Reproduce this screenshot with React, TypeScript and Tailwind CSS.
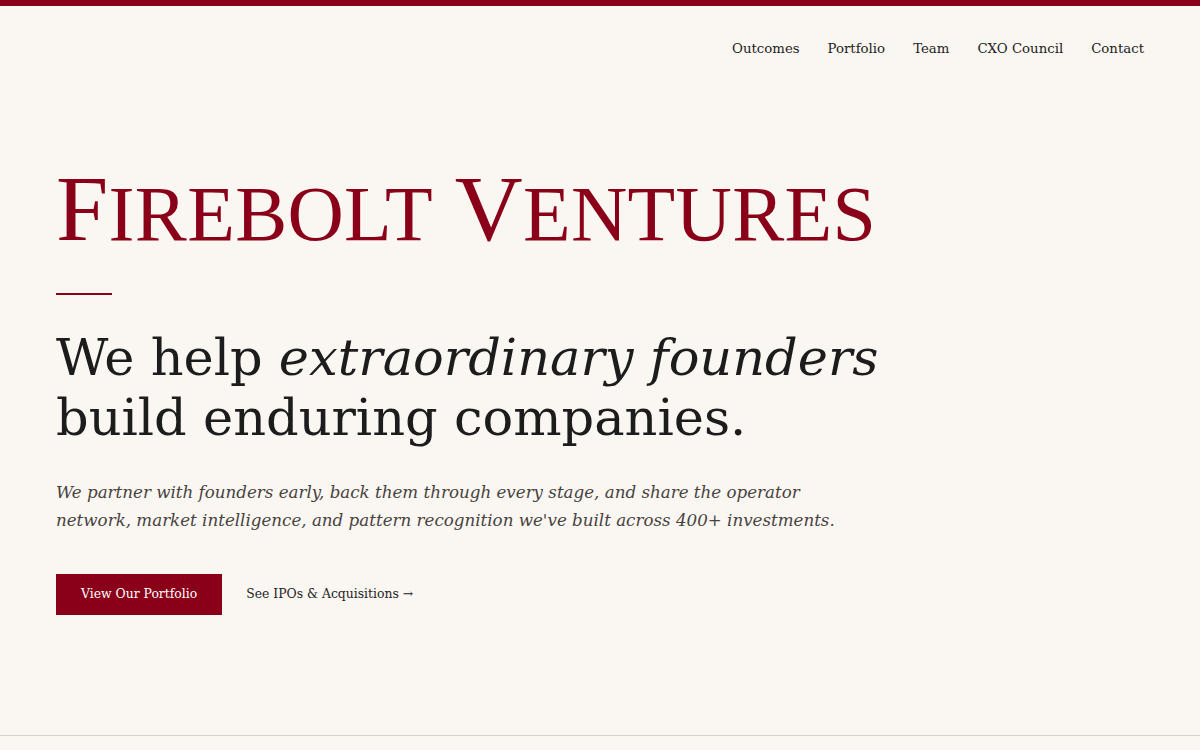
const navLinks = ['Outcomes', 'Portfolio', 'Team', 'CXO Council', 'Contact']

const display = { fontFamily: '"Liberation Serif", "DejaVu Serif", serif' }
const body = { fontFamily: '"DejaVu Serif", "Liberation Serif", serif' }

function Wordmark() {
  // Small-caps wordmark: large initials, smaller capitals for the rest
  return (
    <h1 className="flex items-baseline text-[#8a0019] leading-none tracking-[0.3px]" style={display}>
      <span className="text-[94px]">F</span>
      <span className="text-[78px]">IREBOLT</span>
      <span className="w-[22px]" />
      <span className="text-[94px]">V</span>
      <span className="text-[78px]">ENTURES</span>
    </h1>
  )
}

export default function App() {
  return (
    <div className="min-h-[750px] bg-[#faf6f2] text-[#1f1f1f]" style={body}>
      <div className="h-[6px] bg-[#8a0019]" />

      <header className="flex justify-end px-14 pt-[33px]">
        <nav className="flex gap-7 text-[13.3px] text-[#222]">
          {navLinks.map((l) => (
            <a key={l} href="#" className="leading-5 hover:text-[#8a0019]">
              {l}
            </a>
          ))}
        </nav>
      </header>

      <main className="flex h-[677px] flex-col border-b border-[#d6d1cc] px-14 pt-[102px]">
        <Wordmark />

        <div className="mt-[38px] h-[2px] w-[56px] bg-[#8a0019]" />

        <h2 className="mt-[33px] text-[51px] leading-[60px] text-[#1c1c1c]">
          We help <em>extraordinary founders</em>
          <br />
          build enduring companies.
        </h2>

        <p className="mt-[30px] text-[16.7px] leading-[28px] text-[#474340] italic">
          We partner with founders early, back them through every stage, and share the operator
          <br />
          network, market intelligence, and pattern recognition we've built across 400+ investments.
        </p>

        <div className="mt-[40px] flex items-center gap-6">
          <a href="#" className="flex h-[41px] items-center bg-[#8a0019] px-[25px] text-[12.4px] text-white">
            View Our Portfolio
          </a>
          <a href="#" className="text-[12.4px] text-[#222]">
            See IPOs &amp; Acquisitions →
          </a>
        </div>
      </main>
    </div>
  )
}
